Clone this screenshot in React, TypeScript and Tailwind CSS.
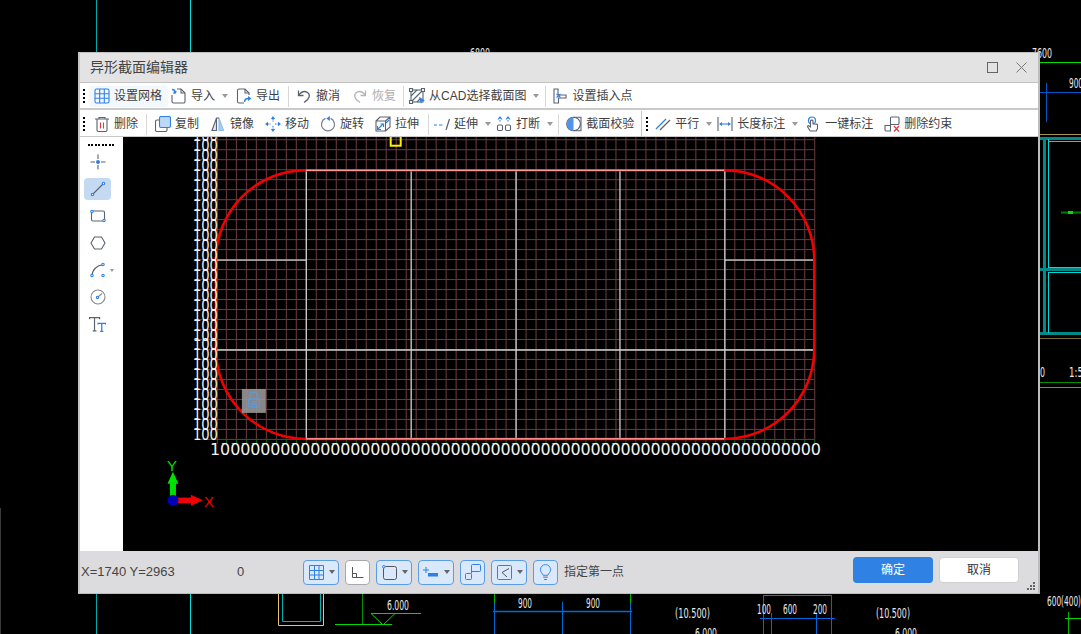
import type { ReactNode } from "react";

const DARK = "#5a6270";
const BLUE = "#2f80e6";

function Ico({ children, size = 16 }: { children: ReactNode; size?: number }) {
  return (
    <svg viewBox="0 0 16 16" width={size} height={size} fill="none" stroke={DARK} strokeWidth="1.1" className="shrink-0">
      {children}
    </svg>
  );
}

const icons: Record<string, ReactNode> = {
  grid: (
    <Ico>
      <rect x="1" y="1" width="14" height="14" rx="1.5" stroke={BLUE} />
      <path d="M5.7 1v14M10.3 1v14M1 5.7h14M1 10.3h14" stroke={BLUE} />
    </Ico>
  ),
  import: (
    <Ico>
      <path d="M1 7v6.5a1.5 1.5 0 0 0 1.5 1.5h10a1.5 1.5 0 0 0 1.500-1.500V5l-4-4H6" />
      <path d="M10 1v4h4" />
      <path d="M1 1.500c2 0 3 1 3 2.500M2.500 5.500L4 4.500l1.500-1" stroke={BLUE} strokeWidth="1.500" />
      <path d="M2 4l2.500 2L5 3z" fill={BLUE} stroke="none" />
    </Ico>
  ),
  export: (
    <Ico>
      <path d="M8 15H3a1.500 1.500 0 0 1-1.500-1.500v-11A1.500 1.500 0 0 1 3 1h6l4 4v2" />
      <path d="M9 1v4h4" />
      <path d="M8.500 14c0-2.500 1.500-3.500 4-3.500" stroke={BLUE} strokeWidth="1.500" />
      <path d="M12 8l3.500 2.500L12 13z" fill={BLUE} stroke="none" />
    </Ico>
  ),
  undo: (
    <Ico>
      <path d="M2.500 2.500v5h5" strokeWidth="1.300" />
      <path d="M2.500 7.500c2.500-3.500 6-5 9-3s2.500 6.500-3.500 10" strokeWidth="1.300" />
    </Ico>
  ),
  redo: (
    <Ico>
      <path d="M13.500 2.500v5h-5" stroke="#b4b4b4" strokeWidth="1.300" />
      <path d="M13.500 7.500c-2.500-3.500-6-5-9-3s-2.500 6.500 3.500 10" stroke="#b4b4b4" strokeWidth="1.300" />
    </Ico>
  ),
  cad: (
    <Ico>
      <rect x="2" y="2" width="12" height="12" />
      <path d="M2 8l6-6M2 14L14 2M8 14l4-4" />
      <rect x="0.500" y="0.500" width="3" height="3" fill="#fff" />
      <rect x="12.500" y="0.500" width="3" height="3" fill="#fff" />
      <rect x="0.500" y="12.500" width="3" height="3" fill="#fff" />
      <path d="M10 9l6 3.500-3 .8-1 2.700z" fill={BLUE} stroke="none" />
    </Ico>
  ),
  insert: (
    <Ico>
      <path d="M2 1h4v4.500l.5 1.500H14v3H6.500v5H2z" />
      <path d="M4.500 6l4 3.500M8.500 6l-4 3.500" stroke={BLUE} />
    </Ico>
  ),
  trash: (
    <Ico>
      <path d="M1 3h14M5 3V1.500h6V3M3 3v11a1.500 1.500 0 0 0 1.500 1.500h7A1.500 1.500 0 0 0 13 14V3" />
      <path d="M6.500 6.500v6M9.500 6.500v6" stroke="#e23b3b" />
    </Ico>
  ),
  copy: (
    <Ico>
      <rect x="4.500" y="0.500" width="11" height="11" rx="1.500" fill="#bcd8f7" stroke={BLUE} />
      <path d="M4 4H2a1.500 1.500 0 0 0-1.500 1.500V14A1.500 1.500 0 0 0 2 15.500h8.500A1.500 1.500 0 0 0 12 14v-2" />
    </Ico>
  ),
  mirror: (
    <Ico>
      <path d="M6.500 2L2 14.500h4.500z" fill="#e4e6ea" />
      <path d="M9 2l4.500 12.500H9z" fill="#a9cdf5" stroke="#8dbbf0" />
      <path d="M6.500 2H9" />
    </Ico>
  ),
  move: (
    <Ico>
      <path d="M8 3v3M8 10v3M3 8h3M10 8h3" stroke={BLUE} strokeDasharray="1.500 1" />
      <path d="M8 0l2.200 3H5.800zM8 16l2.200-3H5.800zM0 8l3-2.200v4.400zM16 8l-3-2.200v4.400z" fill={BLUE} stroke="none" />
    </Ico>
  ),
  rotate: (
    <Ico>
      <path d="M10.500 2.400A6.500 6.500 0 1 1 5.500 2.400" stroke="#7b818c" strokeWidth="1.200" />
      <path d="M9.800 0L6.300 2.500l3.500 2.500z" fill={BLUE} stroke="none" />
    </Ico>
  ),
  stretch: (
    <Ico>
      <path d="M1 5h9.500v10H1zM1 5l4-4h10v10l-4.500 4M10.500 5L15 1" />
      <path d="M3 13l5-5M11 7l3-3" stroke={BLUE} strokeWidth="1.200" />
      <path d="M2.500 10v3.500H6M8.500 11V8H5.500" stroke={BLUE} strokeWidth="1.100" />
    </Ico>
  ),
  extend: (
    <Ico>
      <path d="M0 9h3M5 9h3.500" stroke={BLUE} strokeWidth="1.100" />
      <path d="M15.500 3L12 14" strokeWidth="1.200" />
    </Ico>
  ),
  break: (
    <Ico>
      <rect x="1.500" y="9" width="5" height="5.500" rx="1.200" />
      <rect x="9.500" y="9" width="5" height="5.500" rx="1.200" />
      <path d="M4 1.500V6M12 1.500V6" stroke={BLUE} strokeDasharray="1.500 1" />
      <path d="M2 3.500L4 1l2 2.500M10 3.500L12 1l2 2.500" stroke={BLUE} />
    </Ico>
  ),
  check: (
    <Ico>
      <circle cx="7.500" cy="8" r="6.800" />
      <path d="M7.500 1.200a6.800 6.800 0 0 0 0 13.600z" fill="#4f95ea" stroke="none" />
      <path d="M7.500 1.200h7.500v13.600H7.500" />
    </Ico>
  ),
  parallel: (
    <Ico>
      <path d="M1 13L11 3" stroke={BLUE} strokeWidth="1.200" />
      <path d="M5 14L15 4" strokeWidth="1.200" />
    </Ico>
  ),
  length: (
    <Ico>
      <path d="M1 1v14M15 1v14" />
      <path d="M3 8h10" stroke={BLUE} />
      <path d="M2 8l3-2v4zM14 8l-3-2v4z" fill={BLUE} stroke="none" />
    </Ico>
  ),
  onekey: (
    <Ico>
      <circle cx="7" cy="4.500" r="3.500" stroke={BLUE} strokeWidth="1.200" />
      <path d="M5.500 5v6L3.800 9.800c-1-.5-1.600.5-1 1.300l2.400 3.900h6l1.300-2.500V9c0-1-1.500-1.200-1.500-.2 0-1-1.500-1.200-1.500-.2 0-.8-1.500-1-1.500 0V5c0-1.200-2.500-1.200-2.500 0z" fill="#fff" />
    </Ico>
  ),
  unconstrain: (
    <Ico>
      <path d="M1 9.500h5.500v5.500H2A1 1 0 0 1 1 14zM6.500 9.500V2a1 1 0 0 1 1-1H14a1 1 0 0 1 1 1v5.500a1 1 0 0 1-1 1H6.500" />
      <path d="M10 10l5 5.500M15 10l-5 5.500" stroke="#e23b3b" strokeWidth="1.300" />
    </Ico>
  ),
};

function Caret() {
  return <span className="ml-[7px] h-0 w-0 border-x-[3px] border-t-[4px] border-x-transparent border-t-[#9a9a9a]" />;
}

function Grip({ className }: { className: string }) {
  return (
    <span className={`flex h-[15px] w-[2px] shrink-0 flex-col justify-between ${className}`}>
      {[0, 1, 2, 3].map((i) => (
        <i key={i} className="block h-[2px] w-[2px] bg-black" />
      ))}
    </span>
  );
}

function Sep({ className }: { className: string }) {
  return <span className={`h-[21px] w-px shrink-0 bg-[#d8d8d8] ${className}`} />;
}

function Tool({ icon, label, caret, className = "", muted }: { icon: string; label: string; caret?: boolean; className?: string; muted?: boolean }) {
  return (
    <span className={`flex shrink-0 items-center ${className}`}>
      <span className="flex w-[15px] justify-center">{icons[icon]}</span>
      <span className={`ml-[5px] whitespace-nowrap ${muted ? "text-[#b0b0b0]" : "text-[#3f3f3f]"}`}>{label}</span>
      {caret && <Caret />}
    </span>
  );
}

function SideIcon({ children, active }: { children: ReactNode; active?: boolean }) {
  return (
    <span className={`flex h-[22px] w-[27px] items-center justify-center rounded-[4px] ${active ? "bg-[#c4daf3]" : ""}`}>
      {children}
    </span>
  );
}

function StatusButton({ children, caret, plain, className = "" }: { children: ReactNode; caret?: boolean; plain?: boolean; className?: string }) {
  return (
    <span
      className={`flex h-[25px] shrink-0 items-center justify-center rounded-[4px] border ${
        plain ? "border-[#a8a8a8] bg-white" : "border-[#5a9ce8] bg-[#d9e8fa]"
      } ${caret ? "w-[36px] gap-[5px] pl-[1px]" : "w-[25px]"} ${className}`}
    >
      {children}
      {caret && <span className="h-0 w-0 border-x-[3px] border-t-[4px] border-x-transparent border-t-[#666]" />}
    </span>
  );
}

function Backdrop() {
  const txt = { fill: "#e8e8e8", fontSize: 14, fontFamily: "DejaVu Sans" };
  return (
    <svg viewBox="0 0 1081 634" className="absolute inset-0 h-[634px] w-[1081px]" fill="none">
      <path d="M96.500 0V634" stroke="#00a8a8" />
      <path d="M190.500 0V634" stroke="#00e0e0" />
      <path d="M0.500 508V634" stroke="#3a3a3a" />
      <text x="470" y="58" {...txt} textLength="20" lengthAdjust="spacingAndGlyphs">6800</text>
      {/* right side of the drawing */}
      <text x="1032" y="58" {...txt} textLength="20" lengthAdjust="spacingAndGlyphs">7600</text>
      <path d="M1040 62.500H1081" stroke="#00e000" />
      <text x="1069" y="88" {...txt} textLength="14" lengthAdjust="spacingAndGlyphs">900</text>
      <path d="M1040 92.500H1081" stroke="#0058c8" />
      <path d="M1046.500 83V122" stroke="#0058c8" />
      <path d="M1040 134.500H1081" stroke="#a88f58" />
      <path d="M1040 138.500H1081M1040 269.500H1081M1040 333.500H1081" stroke="#008a8a" strokeWidth="3" />
      <path d="M1044.500 137V335" stroke="#008a8a" strokeWidth="3" />
      <path d="M1048.500 139V268M1048.500 272V333M1048 141.500H1081M1048 272.500H1081M1048 267.500H1081" stroke="#00d8d8" />
      <path d="M1040 338.500H1081" stroke="#7a6a40" />
      <path d="M1061 212.500H1081" stroke="#007a00" strokeWidth="2" />
      <path d="M1068 212.500H1073" stroke="#00e000" strokeWidth="3" />
      <text x="1040" y="377" {...txt} textLength="5" lengthAdjust="spacingAndGlyphs">0</text>
      <text x="1069" y="377" {...txt} textLength="14" lengthAdjust="spacingAndGlyphs">1:5</text>
      <path d="M1040 382.500H1081" stroke="#009000" />
      <path d="M1040 387.500H1081" stroke="#00e000" />
      {/* below the dialog */}
      <path d="M278.500 594V625.500H323.500V594" stroke="#e8c56a" />
      <path d="M282.500 594V621.500H320.500V594" stroke="#00b0b0" />
      <path d="M362.500 594V625" stroke="#009000" />
      <path d="M335 624.500H392" stroke="#00d800" />
      <path d="M371 613.500H421" stroke="#00d800" />
      <path d="M371 613.500L383 625L395 613.500" stroke="#00d800" />
      <text x="387" y="610" {...txt} textLength="22" lengthAdjust="spacingAndGlyphs">6.000</text>
      <path d="M494.500 594V634M630.500 594V634" stroke="#0068d8" />
      <path d="M494.500 594V604M630.500 594V604" stroke="#00b000" />
      <path d="M562.500 602V634" stroke="#0068d8" />
      <path d="M493 611.500H632" stroke="#0068d8" strokeWidth="1.500" />
      <text x="518" y="608" {...txt} textLength="14" lengthAdjust="spacingAndGlyphs">900</text>
      <text x="586" y="608" {...txt} textLength="14" lengthAdjust="spacingAndGlyphs">900</text>
      <text x="675" y="618" {...txt} textLength="35" lengthAdjust="spacingAndGlyphs">(10.500)</text>
      <text x="695" y="638" {...txt} textLength="22" lengthAdjust="spacingAndGlyphs">6.000</text>
      <path d="M763 595.500H832" stroke="#00b000" />
      <path d="M831.500 595V608" stroke="#009000" />
      <path d="M763.500 596V634M771.500 613V634M816.500 613V634M831.500 608V634" stroke="#0068d8" />
      <path d="M760 618.500H835" stroke="#0068d8" />
      <text x="757" y="614" {...txt} textLength="14" lengthAdjust="spacingAndGlyphs">100</text>
      <text x="783" y="614" {...txt} textLength="14" lengthAdjust="spacingAndGlyphs">600</text>
      <text x="813" y="614" {...txt} textLength="14" lengthAdjust="spacingAndGlyphs">200</text>
      <text x="876" y="618" {...txt} textLength="34" lengthAdjust="spacingAndGlyphs">(10.500)</text>
      <text x="895" y="638" {...txt} textLength="22" lengthAdjust="spacingAndGlyphs">6.000</text>
      <text x="1047" y="606" {...txt} textLength="34" lengthAdjust="spacingAndGlyphs">600(400)</text>
      <path d="M1068.500 612V634" stroke="#00b000" />
      <path d="M1065 618.500H1081" stroke="#00d800" />
    </svg>
  );
}

function Drawing() {
  const xs = Array.from({ length: 61 }, (_, i) => 216.5 + i * 9.98);
  const ys = Array.from({ length: 31 }, (_, i) => 439.5 - i * 10);
  const labelXs = Array.from({ length: 59 }, (_, i) => 210 + i * 10.02).reverse();
  const shape = "M306 170H725A90 90 0 0 1 815 260V350A90 90 0 0 1 725 439H306A90 90 0 0 1 216 350V260A90 90 0 0 1 306 170Z";
  return (
    <svg viewBox="123 137 916 414" className="h-full w-full" fill="none">
      {xs.map((x) => (
        <path key={x} d={`M${x.toFixed(0)}.5 137V439`} stroke="#6e3c40" />
      ))}
      {ys.map((y) => (
        <path key={y} d={`M216 ${y}H815`} stroke="#6e3c40" />
      ))}
      {ys.map((y) => (
        <path key={y} d={`M198 ${y}H216`} stroke="#0a6a14" />
      ))}
      {xs.map((x) => (
        <path key={x} d={`M${x.toFixed(0)}.5 439V445`} stroke="#0a6a14" />
      ))}
      <path
        d="M306.500 170V439M411.500 170V439M516.500 170V439M620.500 170V439M725.500 170V439M216 260H306M725 260H815M216 350H815"
        stroke="#d0d0d0"
        strokeWidth="1.300"
      />
      <path d={shape} stroke="#f40000" strokeWidth="2.500" />
      <path d="M306 170H725M306 439H725" stroke="#ffe0e0" />
      {ys.map((y) => (
        <text key={y} x="193" y={y + 1} fill="#f2f2f2" fontSize="16" fontFamily="DejaVu Sans" textLength="25" lengthAdjust="spacingAndGlyphs">
          100
        </text>
      ))}
      {/* painted right to left, each label hides all but the last digit of the one after it */}
      {labelXs.map((x) => (
        <g key={x}>
          <rect x={x} y="444" width="30.200" height="13" fill="#000" />
          <text x={x} y="455" fill="#f2f2f2" fontSize="16" fontFamily="DejaVu Sans">
            100
          </text>
        </g>
      ))}
      <rect x="391" y="136" width="10" height="9.500" stroke="#ffee00" strokeWidth="2" />
      {/* lock marker */}
      <rect x="242" y="389" width="24" height="24" fill="#969696" fillOpacity="0.9" />
      <path d="M250 399v-3a4 4 0 0 1 8 0v3M248.500 399h11v8h-11zM252 402h4v2.500h-4z" stroke="#5a9ce8" />
      {/* axes */}
      <path d="M173 500V483" stroke="#00e000" strokeWidth="6" />
      <path d="M173 472L178.500 484H167.500z" fill="#00e000" />
      <path d="M176 500.500H192" stroke="#f00000" strokeWidth="5.500" />
      <path d="M203 500.500L191 495V506z" fill="#f00000" />
      <circle cx="173" cy="500.500" r="5.500" fill="#0000b4" />
      <text x="167" y="471" fill="#00e000" fontSize="15" fontFamily="Liberation Sans">Y</text>
      <text x="204" y="507" fill="#f00000" fontSize="15" fontFamily="Liberation Sans">X</text>
    </svg>
  );
}

export default function App() {
  return (
    <div className="relative h-[634px] w-[1081px] overflow-hidden bg-black text-[12px] [font-family:'Liberation_Sans','Noto_Sans_CJK_SC',sans-serif]">
      <Backdrop />
      {/* editor window */}
      <div className="absolute left-[78px] top-[52px] flex h-[542px] w-[962px] flex-col border-x-2 border-b border-t border-x-[#c6c6c6] border-b-[#bcbcbc] border-t-[#c0c0c0] border-r-[#bdbdbd] bg-[#c9c9c9]">
        <div className="flex h-[29px] shrink-0 items-center bg-[#e3e3e3] pl-[10px] pr-[10px]">
          <span className="text-[14px] text-[#444]">异形截面编辑器</span>
          <svg viewBox="0 0 11 11" width="11" height="11" className="ml-auto" fill="none" stroke="#666">
            <rect x="0.500" y="0.500" width="10" height="10" />
          </svg>
          <svg viewBox="0 0 11 11" width="11" height="11" className="ml-[18px] mr-[1px]" fill="none" stroke="#777">
            <path d="M0.500 0.500L10.500 10.500M10.500 0.500L0.500 10.500" />
          </svg>
        </div>

        <div className="flex h-[26px] shrink-0 items-center border-t border-[#c4c4c4] bg-white pt-px">
          <Grip className="ml-[3px]" />
          <span className="ml-[4px] flex h-[21px] items-center rounded-[3px] bg-[#f3f8fd] pl-[5px] pr-[6px]">
            <Tool icon="grid" label="设置网格" />
          </span>
          <Tool icon="import" label="导入" caret className="ml-[3px]" />
          <Tool icon="export" label="导出" className="ml-[8px]" />
          <Sep className="ml-[8px]" />
          <Tool icon="undo" label="撤消" className="ml-[7px]" />
          <Tool icon="redo" label="恢复" muted className="ml-[12px]" />
          <Sep className="ml-[7px]" />
          <Tool icon="cad" label="从CAD选择截面图" caret className="ml-[5px]" />
          <Sep className="ml-[6px]" />
          <Tool icon="insert" label="设置插入点" className="ml-[6px]" />
        </div>

        <div className="mt-[2px] flex h-[26px] shrink-0 items-center bg-white pt-[2px]">
          <Grip className="ml-[3px]" />
          <Tool icon="trash" label="删除" className="ml-[9px]" />
          <Sep className="ml-[8px]" />
          <Tool icon="copy" label="复制" className="ml-[8px]" />
          <Tool icon="mirror" label="镜像" className="ml-[11px]" />
          <Tool icon="move" label="移动" className="ml-[11px]" />
          <Tool icon="rotate" label="旋转" className="ml-[11px]" />
          <Tool icon="stretch" label="拉伸" className="ml-[11px]" />
          <Sep className="ml-[9px]" />
          <Tool icon="extend" label="延伸" caret className="ml-[5px]" />
          <Tool icon="break" label="打断" caret className="ml-[5px]" />
          <Sep className="ml-[5px]" />
          <Tool icon="check" label="截面校验" className="ml-[7px]" />
          <span className="ml-[7px] h-[26px] w-px bg-[#c9c9c9]" />
          <Grip className="ml-[4px]" />
          <Tool icon="parallel" label="平行" caret className="ml-[7px]" />
          <Tool icon="length" label="长度标注" caret className="ml-[5px]" />
          <Tool icon="onekey" label="一键标注" className="ml-[7px]" />
          <Tool icon="unconstrain" label="删除约束" className="ml-[11px]" />
        </div>

        <div className="mt-px flex min-h-0 flex-1">
          <div className="flex w-[43px] shrink-0 flex-col items-start gap-[5px] bg-white pl-[4px] pt-[7px]">
            <div className="ml-[4px] flex w-[26px] justify-between">
              {[0, 1, 2, 3, 4, 5, 6, 7].map((i) => (
                <i key={i} className="block h-[2px] w-[2px] bg-black" />
              ))}
            </div>
            <SideIcon>
              <Ico>
                <path d="M8 0.500V5M8 11V15.500M0.500 8H5M11 8H15.500" />
                <circle cx="8" cy="8" r="2" fill={BLUE} stroke="none" />
              </Ico>
            </SideIcon>
            <SideIcon active>
              <Ico>
                <path d="M3 13L13 3" />
                <circle cx="2.500" cy="13.500" r="1.200" fill="#fff" stroke={BLUE} />
                <circle cx="13.500" cy="2.500" r="1.200" fill="#fff" stroke={BLUE} />
              </Ico>
            </SideIcon>
            <SideIcon>
              <Ico>
                <rect x="1.500" y="3" width="13" height="10" rx="1.500" />
                <circle cx="2" cy="3.500" r="1.200" fill="#fff" stroke={BLUE} />
                <circle cx="14" cy="12.500" r="1.200" fill="#fff" stroke={BLUE} />
              </Ico>
            </SideIcon>
            <SideIcon>
              <Ico>
                <path d="M4.500 2H11.500L15 8L11.500 14H4.500L1 8Z" />
              </Ico>
            </SideIcon>
            <span className="relative flex">
              <SideIcon>
                <Ico>
                  <path d="M2 14C2 8 7 3 13 3" />
                  <circle cx="2" cy="13.500" r="1.200" fill="#fff" stroke={BLUE} />
                  <circle cx="13" cy="2.500" r="1.200" fill="#fff" stroke={BLUE} />
                  <circle cx="13" cy="13.500" r="1.200" fill="#fff" stroke={BLUE} />
                </Ico>
              </SideIcon>
              <span className="absolute left-[26px] top-[10px] h-0 w-0 border-x-[2.500px] border-t-[3px] border-x-transparent border-t-[#9a9a9a]" />
            </span>
            <SideIcon>
              <Ico>
                <circle cx="8" cy="8" r="7" stroke="#888" />
                <path d="M8 8L12 4.500" stroke="#888" />
                <circle cx="7.500" cy="8.500" r="1.100" fill="#fff" stroke={BLUE} />
              </Ico>
            </SideIcon>
            <SideIcon>
              <Ico size={17}>
                <path d="M0.500 3V1.500H10V3M5.200 1.500V14M3.500 14H7" />
                <path d="M8.500 8V7H15.500V8M12 7V14.500M10.500 14.500H13.500" stroke={BLUE} strokeWidth="1.200" />
              </Ico>
            </SideIcon>
          </div>
          <div className="min-w-0 flex-1 bg-black">
            <Drawing />
          </div>
        </div>

        <div className="relative flex h-[42px] shrink-0 items-center bg-[#dcdcdf] pl-px text-[#444]">
          <span className="w-[156px] shrink-0 whitespace-nowrap text-[13px]">X=1740 Y=2963</span>
          <span className="w-[66px] shrink-0 text-[13px]">0</span>
          <StatusButton caret>
            <svg viewBox="0 0 15 15" width="15" height="15" fill="none" stroke={BLUE}>
              <path d="M0.500 0.500H14.500V14.500H0.500ZM5.500 0.500V14.500M10 0.500V14.500M0.500 5.500H14.500M0.500 10H14.500" />
            </svg>
          </StatusButton>
          <StatusButton plain className="ml-[6px]">
            <svg viewBox="0 0 15 15" width="15" height="15" fill="none" stroke="#555">
              <path d="M2.500 2V12.500H13.500M2.500 8.500H6.500V12.500" />
            </svg>
          </StatusButton>
          <StatusButton caret className="ml-[6px]">
            <svg viewBox="0 0 15 15" width="15" height="15" fill="none" stroke="#555">
              <rect x="1.500" y="1.500" width="13" height="13" rx="2" />
              <circle cx="1.800" cy="1.800" r="1.300" fill="#d9e8fa" stroke={BLUE} />
            </svg>
          </StatusButton>
          <StatusButton caret className="ml-[6px]">
            <svg viewBox="0 0 16 15" width="16" height="15" fill="none">
              <path d="M0 5H6M3 2V8" stroke={BLUE} />
              <rect x="5" y="8" width="10" height="3.500" fill={BLUE} />
            </svg>
          </StatusButton>
          <StatusButton className="ml-[6px]">
            <svg viewBox="0 0 16 16" width="16" height="16" fill="none" stroke={BLUE}>
              <rect x="0.500" y="9.500" width="6" height="6" rx="1" />
              <path d="M6.500 9.500V1.500a1 1 0 0 1 1-1H14.500a1 1 0 0 1 1 1V6.500a1 1 0 0 1-1 1H6.500" />
            </svg>
          </StatusButton>
          <StatusButton caret className="ml-[6px]">
            <svg viewBox="0 0 15 15" width="15" height="15" fill="none">
              <rect x="0.500" y="0.500" width="14" height="14" rx="1" stroke={BLUE} />
              <path d="M12 3.500L5 7.500L10 12" stroke="#555" />
            </svg>
          </StatusButton>
          <StatusButton className="ml-[6px]">
            <svg viewBox="0 0 14 18" width="13" height="17" fill="none" stroke="#5b6472">
              <path d="M4.500 12C4 10 1.500 9 1.500 6a5.500 5.500 0 0 1 11 0c0 3-2.500 4-3 6z" stroke={BLUE} />
              <path d="M4.500 14H9.500M5.500 16.500H8.500" />
            </svg>
          </StatusButton>
          <span className="ml-[6px] whitespace-nowrap text-[#444]">指定第一点</span>
          <span className="mb-[5px] ml-auto flex h-[26px] w-[80px] items-center justify-center rounded-[4px] bg-[#2f82e3] text-white">确定</span>
          <span className="mb-[5px] ml-[6px] mr-[19px] flex h-[26px] w-[80px] items-center justify-center rounded-[4px] border border-[#d0d0d0] bg-white text-[#333]">取消</span>
          <span className="absolute bottom-[3px] right-[3px] grid grid-cols-3 gap-px">
            <i className="col-start-3 block h-[2px] w-[2px] bg-[#666]" />
            <i className="col-start-2 block h-[2px] w-[2px] bg-[#666]" />
            <i className="col-start-3 block h-[2px] w-[2px] bg-[#666]" />
            <i className="block h-[2px] w-[2px] bg-[#666]" />
            <i className="block h-[2px] w-[2px] bg-[#666]" />
            <i className="block h-[2px] w-[2px] bg-[#666]" />
          </span>
        </div>
      </div>
    </div>
  );
}
